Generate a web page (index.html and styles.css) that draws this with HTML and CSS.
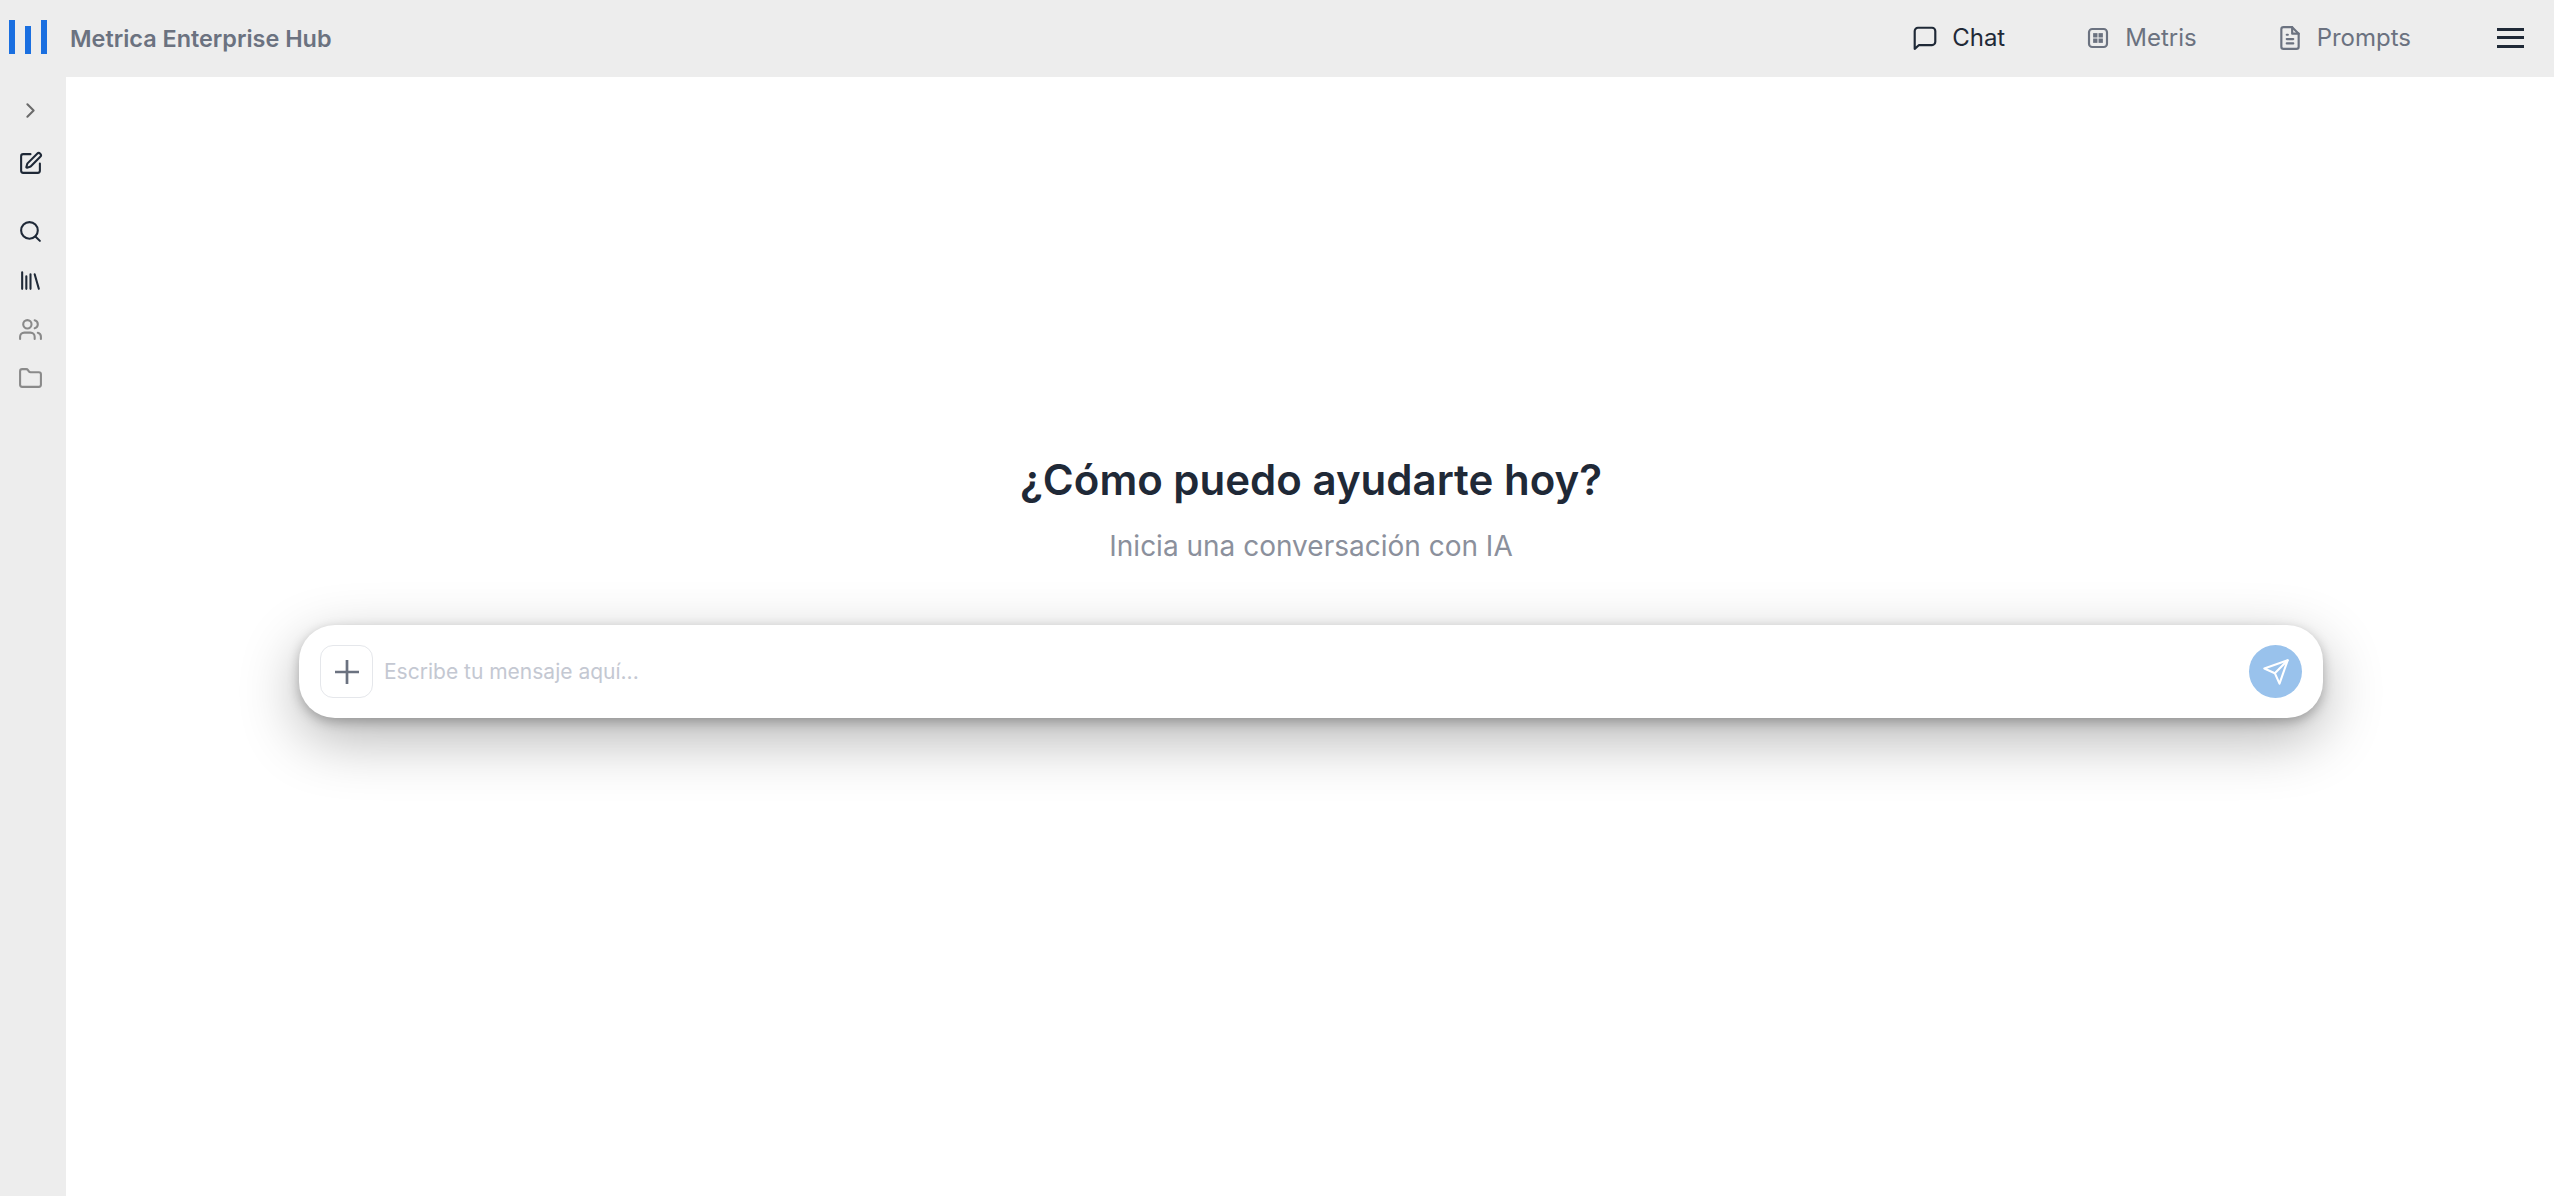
FILE: index.html
```html
<!DOCTYPE html>
<html lang="es">
<head>
<meta charset="utf-8">
<title>Metrica Enterprise Hub</title>
<link rel="stylesheet" href="styles.css">
</head>
<body>
<header class="topbar">
  <div class="brand">
    <svg class="logo" width="38" height="34" viewBox="0 0 38 34"><rect x="0" y="0" width="6" height="34" fill="#1a6fe0"/><rect x="16" y="6" width="6" height="28" fill="#1a6fe0"/><rect x="32" y="0" width="6" height="34" fill="#1a6fe0"/></svg>
    <span class="brand-name">Metrica Enterprise Hub</span>
  </div>
  <nav class="nav">
    <a class="nav-item active">
      <svg class="nav-icon" viewBox="0 0 24 24" fill="none" stroke="currentColor" stroke-width="2" stroke-linejoin="round"><path d="M2.500 22V5.500a3 3 0 0 1 3-3h13a3 3 0 0 1 3 3v10a3 3 0 0 1-3 3H6.500z"/></svg>
      <span>Chat</span>
    </a>
    <a class="nav-item">
      <svg class="nav-icon" viewBox="0 0 24 24" fill="none" stroke="currentColor" stroke-width="2"><rect x="3.700" y="3.700" width="16.600" height="16.600" rx="3"/><rect x="7.500" y="7.500" width="4" height="4" fill="currentColor" stroke="none"/><rect x="12.500" y="7.500" width="4" height="4" fill="currentColor" stroke="none"/><rect x="7.500" y="12.500" width="4" height="4" fill="currentColor" stroke="none"/><rect x="12.500" y="12.500" width="4" height="4" fill="currentColor" stroke="none"/></svg>
      <span>Metris</span>
    </a>
    <a class="nav-item">
      <svg class="nav-icon" viewBox="0 0 24 24" fill="none" stroke="currentColor" stroke-width="2" stroke-linecap="round" stroke-linejoin="round"><path d="M14 2H6a2 2 0 0 0-2 2v16a2 2 0 0 0 2 2h12a2 2 0 0 0 2-2V8z"/><path d="M14 2v6h6M9 13h6M9 17h6M9 9h1"/></svg>
      <span>Prompts</span>
    </a>
    <button class="menu" aria-label="Menú"><span></span><span></span><span></span></button>
  </nav>
</header>
<div class="layout">
  <aside class="sidebar">
    <svg class="side-icon muted-dark" viewBox="0 0 24 24" fill="none" stroke="currentColor" stroke-width="2" stroke-linecap="round" stroke-linejoin="round"><path d="m9 6 6 6-6 6"/></svg>
    <svg class="side-icon dark gap-edit" viewBox="0 0 24 24" fill="none" stroke="currentColor" stroke-width="2" stroke-linecap="round" stroke-linejoin="round"><path d="M12 3H5a2 2 0 0 0-2 2v14a2 2 0 0 0 2 2h14a2 2 0 0 0 2-2v-7"/><path d="M18.375 2.625a1 1 0 0 1 3 3l-9.013 9.014a2 2 0 0 1-.853.505l-2.873.84a.5.5 0 0 1-.62-.62l.84-2.873a2 2 0 0 1 .506-.852z"/></svg>
    <svg class="side-icon dark gap-search" viewBox="0 0 24 24" fill="none" stroke="currentColor" stroke-width="2" stroke-linecap="round" stroke-linejoin="round"><circle cx="11" cy="11" r="8"/><path d="m21 21-4.300-4.300"/></svg>
    <svg class="side-icon dark gap-list" viewBox="0 0 24 24" fill="none" stroke="currentColor" stroke-width="2" stroke-linecap="round" stroke-linejoin="round"><path d="m16 6 4 14M12 6v14M8 8v12M4 4v16"/></svg>
    <svg class="side-icon muted gap-list" viewBox="0 0 24 24" fill="none" stroke="currentColor" stroke-width="2" stroke-linecap="round" stroke-linejoin="round"><circle cx="9" cy="7" r="4"/><path d="M16 21v-2a4 4 0 0 0-4-4H6a4 4 0 0 0-4 4v2M22 21v-2a4 4 0 0 0-3-3.870M16 3.130a4 4 0 0 1 0 7.750"/></svg>
    <svg class="side-icon muted gap-list" viewBox="0 0 24 24" fill="none" stroke="currentColor" stroke-width="2" stroke-linecap="round" stroke-linejoin="round"><path d="M20 20a2 2 0 0 0 2-2V8a2 2 0 0 0-2-2h-7.900a2 2 0 0 1-1.690-.900L9.600 3.900A2 2 0 0 0 7.930 3H4a2 2 0 0 0-2 2v13a2 2 0 0 0 2 2Z"/></svg>
  </aside>
  <main class="main">
    <h1 class="title">¿Cómo puedo ayudarte hoy?</h1>
    <p class="subtitle">Inicia una conversación con IA</p>
    <div class="composer">
      <button class="attach" aria-label="Adjuntar">
        <svg width="26" height="26" viewBox="0 0 26 26" fill="none" stroke="#6b7280" stroke-width="2.700"><path d="M13 1v24M1 13h24"/></svg>
      </button>
      <div class="placeholder">Escribe tu mensaje aquí...</div>
      <button class="send" aria-label="Enviar">
        <svg width="28" height="28" viewBox="0 0 24 24" fill="none" stroke="#fff" stroke-width="1.800" stroke-linejoin="round" stroke-linecap="round"><path d="M22 2 15 22 11 13 2 9z"/><path d="M22 2 11 13"/></svg>
      </button>
    </div>
  </main>
</div>
</body>
</html>
```
FILE: styles.css
```css
* { box-sizing: border-box; }
html, body { height: 100%; }
body {
  margin: 0;
  font-family: Inter, "Liberation Sans", sans-serif;
  background: #fff;
  display: flex;
  flex-direction: column;
  overflow: hidden;
}
.topbar {
  height: 77px;
  flex: none;
  background: #ededed;
  display: flex;
  align-items: center;
  justify-content: space-between;
  padding: 0 30px 0 9px;
}
.brand { display: flex; align-items: center; gap: 23px; }
.logo { display: block; margin-bottom: 3px; }
.brand-name { font-size: 23.4px; font-weight: 600; color: #6b7280; }
.nav { display: flex; align-items: center; margin-bottom: 2px; }
.nav-item {
  display: flex;
  align-items: center;
  gap: 14px;
  font-size: 24px;
  font-weight: 400;
  color: #6b7280;
  margin-right: 80px;
}
.nav-item.active { color: #1f2937; }
.nav-icon { width: 26px; height: 26px; display: block; }
.menu {
  width: 27px;
  height: 20px;
  margin-left: 6px;
  padding: 0;
  border: 0;
  background: none;
  display: flex;
  flex-direction: column;
  justify-content: space-between;
}
.menu span { display: block; height: 3px; background: #1f2937; }
.layout { flex: 1; display: flex; min-height: 0; }
.sidebar {
  width: 66px;
  flex: none;
  background: #ededed;
  display: flex;
  flex-direction: column;
  align-items: center;
  padding: 21px 5px 0 0;
}
.side-icon { width: 25px; height: 25px; display: block; }
.dark { color: #1f2937; }
.muted { color: #8a8a8a; }
.muted-dark { color: #6b6b6b; }
.gap-edit { margin-top: 28px; }
.gap-search { margin-top: 43px; }
.gap-list { margin-top: 24px; }
.main {
  flex: 1;
  display: flex;
  flex-direction: column;
  align-items: center;
  padding: 375px 0 0 2px;
}
.title {
  margin: 0;
  font-size: 42px;
  line-height: 56px;
  font-weight: 600;
  color: #1f2937;
}
.subtitle {
  margin: 20px 0 0;
  font-size: 28px;
  line-height: 36px;
  color: #8b909c;
}
.composer {
  margin-top: 61px;
  width: 2024px;
  height: 93px;
  background: #fff;
  border-radius: 36px;
  box-shadow: 0 20px 60px rgba(0, 0, 0, .3), 0 4px 12px rgba(0, 0, 0, .25);
  display: flex;
  align-items: center;
  padding: 0 21px;
}
.attach {
  width: 53px;
  height: 53px;
  flex: none;
  padding: 0;
  background: #fff;
  border: 1px solid #e5e7eb;
  border-radius: 13px;
  display: flex;
  align-items: center;
  justify-content: center;
}
.placeholder {
  flex: 1;
  margin-left: 11px;
  font-size: 21px;
  color: #c4c8d2;
}
.send {
  width: 53px;
  height: 53px;
  flex: none;
  padding: 0;
  border: 0;
  border-radius: 50%;
  background: #99c2ec;
  display: flex;
  align-items: center;
  justify-content: center;
}
```
